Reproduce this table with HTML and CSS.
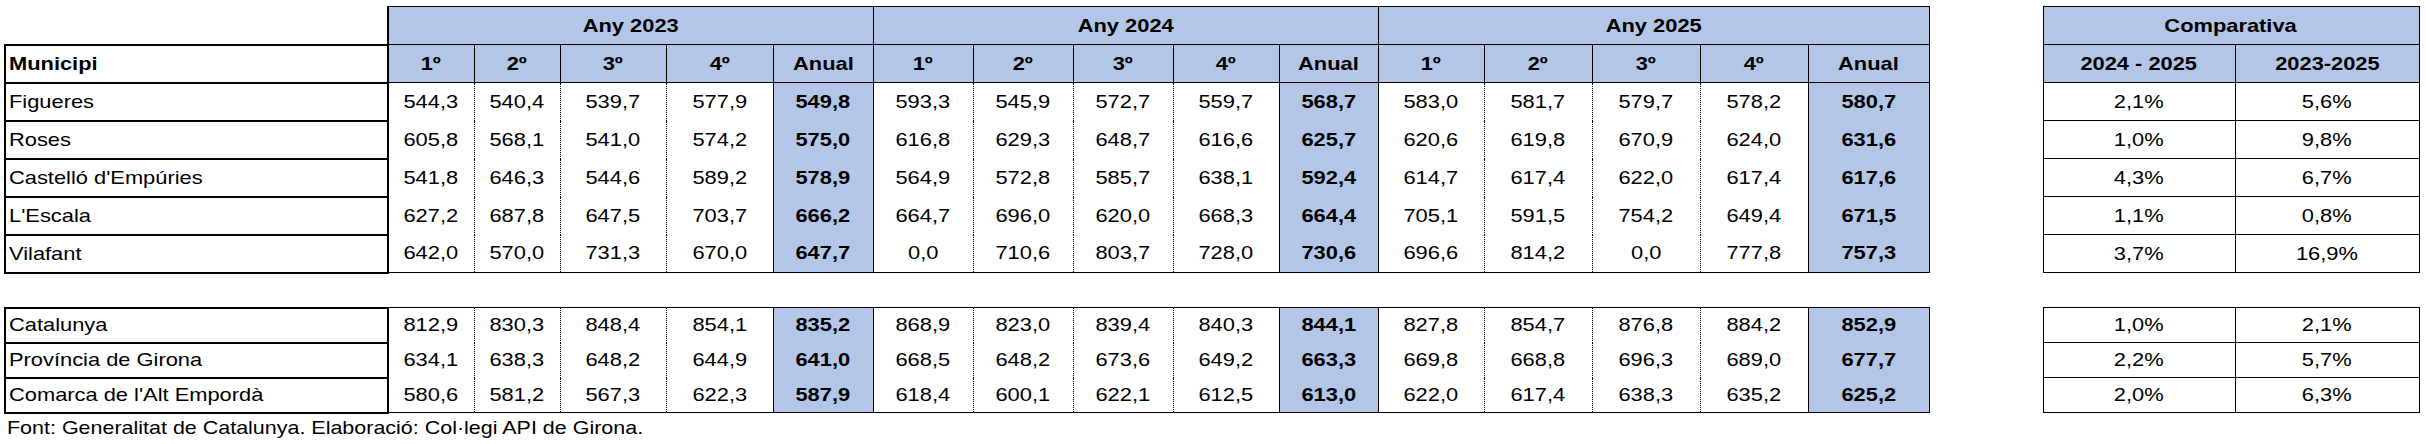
FILE: index.html
```html
<!DOCTYPE html>
<html lang="ca">
<head>
<meta charset="utf-8">
<title>Taula</title>
<link rel="stylesheet" href="styles.css">
</head>
<body>
<div class="sheet">
<table class="grid">
<colgroup>
<col class="w-name">
<col class="w86"><col class="w86"><col class="w106"><col class="w107"><col class="w100">
<col class="w100"><col class="w100"><col class="w100"><col class="w106"><col class="w99">
<col class="w106"><col class="w108"><col class="w108"><col class="w108"><col class="w121">
<col class="w-gap">
<col class="w192"><col class="w184">
</colgroup>
<tr class="hr">
<td class="blank"></td>
<th class="year first" colspan="5"><span class="t">Any 2023</span></th>
<th class="year" colspan="5"><span class="t">Any 2024</span></th>
<th class="year" colspan="5"><span class="t">Any 2025</span></th>
<td class="gap"></td>
<th class="year" colspan="2"><span class="t">Comparativa</span></th>
</tr>
<tr class="hr">
<th class="name head"><span class="t">Municipi</span></th>
<th class="hc"><span class="t">1º</span></th><th class="hc"><span class="t">2º</span></th><th class="hc"><span class="t">3º</span></th><th class="hc"><span class="t">4º</span></th><th class="hc"><span class="t">Anual</span></th>
<th class="hc"><span class="t">1º</span></th><th class="hc"><span class="t">2º</span></th><th class="hc"><span class="t">3º</span></th><th class="hc"><span class="t">4º</span></th><th class="hc"><span class="t">Anual</span></th>
<th class="hc"><span class="t">1º</span></th><th class="hc"><span class="t">2º</span></th><th class="hc"><span class="t">3º</span></th><th class="hc"><span class="t">4º</span></th><th class="hc"><span class="t">Anual</span></th>
<td class="gap"></td>
<th class="hc"><span class="t">2024 - 2025</span></th><th class="hc"><span class="t">2023-2025</span></th>
</tr>
<tr class="dr">
<td class="name"><span class="t">Figueres</span></td>
<td class="q"><span class="t">544,3</span></td><td class="q"><span class="t">540,4</span></td><td class="q"><span class="t">539,7</span></td><td class="q"><span class="t">577,9</span></td><td class="an"><span class="t">549,8</span></td>
<td class="q"><span class="t">593,3</span></td><td class="q"><span class="t">545,9</span></td><td class="q"><span class="t">572,7</span></td><td class="q"><span class="t">559,7</span></td><td class="an"><span class="t">568,7</span></td>
<td class="q"><span class="t">583,0</span></td><td class="q"><span class="t">581,7</span></td><td class="q"><span class="t">579,7</span></td><td class="q"><span class="t">578,2</span></td><td class="an"><span class="t">580,7</span></td>
<td class="gap"></td>
<td class="pc"><span class="t">2,1%</span></td><td class="pc"><span class="t">5,6%</span></td>
</tr>
<tr class="dr">
<td class="name"><span class="t">Roses</span></td>
<td class="q"><span class="t">605,8</span></td><td class="q"><span class="t">568,1</span></td><td class="q"><span class="t">541,0</span></td><td class="q"><span class="t">574,2</span></td><td class="an"><span class="t">575,0</span></td>
<td class="q"><span class="t">616,8</span></td><td class="q"><span class="t">629,3</span></td><td class="q"><span class="t">648,7</span></td><td class="q"><span class="t">616,6</span></td><td class="an"><span class="t">625,7</span></td>
<td class="q"><span class="t">620,6</span></td><td class="q"><span class="t">619,8</span></td><td class="q"><span class="t">670,9</span></td><td class="q"><span class="t">624,0</span></td><td class="an"><span class="t">631,6</span></td>
<td class="gap"></td>
<td class="pc"><span class="t">1,0%</span></td><td class="pc"><span class="t">9,8%</span></td>
</tr>
<tr class="dr">
<td class="name"><span class="t">Castelló d'Empúries</span></td>
<td class="q"><span class="t">541,8</span></td><td class="q"><span class="t">646,3</span></td><td class="q"><span class="t">544,6</span></td><td class="q"><span class="t">589,2</span></td><td class="an"><span class="t">578,9</span></td>
<td class="q"><span class="t">564,9</span></td><td class="q"><span class="t">572,8</span></td><td class="q"><span class="t">585,7</span></td><td class="q"><span class="t">638,1</span></td><td class="an"><span class="t">592,4</span></td>
<td class="q"><span class="t">614,7</span></td><td class="q"><span class="t">617,4</span></td><td class="q"><span class="t">622,0</span></td><td class="q"><span class="t">617,4</span></td><td class="an"><span class="t">617,6</span></td>
<td class="gap"></td>
<td class="pc"><span class="t">4,3%</span></td><td class="pc"><span class="t">6,7%</span></td>
</tr>
<tr class="dr">
<td class="name"><span class="t">L'Escala</span></td>
<td class="q"><span class="t">627,2</span></td><td class="q"><span class="t">687,8</span></td><td class="q"><span class="t">647,5</span></td><td class="q"><span class="t">703,7</span></td><td class="an"><span class="t">666,2</span></td>
<td class="q"><span class="t">664,7</span></td><td class="q"><span class="t">696,0</span></td><td class="q"><span class="t">620,0</span></td><td class="q"><span class="t">668,3</span></td><td class="an"><span class="t">664,4</span></td>
<td class="q"><span class="t">705,1</span></td><td class="q"><span class="t">591,5</span></td><td class="q"><span class="t">754,2</span></td><td class="q"><span class="t">649,4</span></td><td class="an"><span class="t">671,5</span></td>
<td class="gap"></td>
<td class="pc"><span class="t">1,1%</span></td><td class="pc"><span class="t">0,8%</span></td>
</tr>
<tr class="dr last">
<td class="name"><span class="t">Vilafant</span></td>
<td class="q"><span class="t">642,0</span></td><td class="q"><span class="t">570,0</span></td><td class="q"><span class="t">731,3</span></td><td class="q"><span class="t">670,0</span></td><td class="an"><span class="t">647,7</span></td>
<td class="q"><span class="t">0,0</span></td><td class="q"><span class="t">710,6</span></td><td class="q"><span class="t">803,7</span></td><td class="q"><span class="t">728,0</span></td><td class="an"><span class="t">730,6</span></td>
<td class="q"><span class="t">696,6</span></td><td class="q"><span class="t">814,2</span></td><td class="q"><span class="t">0,0</span></td><td class="q"><span class="t">777,8</span></td><td class="an"><span class="t">757,3</span></td>
<td class="gap"></td>
<td class="pc"><span class="t">3,7%</span></td><td class="pc"><span class="t">16,9%</span></td>
</tr>
<tr class="sep"><td class="gap" colspan="19"></td></tr>
<tr class="br first-row">
<td class="name"><span class="t">Catalunya</span></td>
<td class="q"><span class="t">812,9</span></td><td class="q"><span class="t">830,3</span></td><td class="q"><span class="t">848,4</span></td><td class="q"><span class="t">854,1</span></td><td class="an"><span class="t">835,2</span></td>
<td class="q"><span class="t">868,9</span></td><td class="q"><span class="t">823,0</span></td><td class="q"><span class="t">839,4</span></td><td class="q"><span class="t">840,3</span></td><td class="an"><span class="t">844,1</span></td>
<td class="q"><span class="t">827,8</span></td><td class="q"><span class="t">854,7</span></td><td class="q"><span class="t">876,8</span></td><td class="q"><span class="t">884,2</span></td><td class="an"><span class="t">852,9</span></td>
<td class="gap"></td>
<td class="pc"><span class="t">1,0%</span></td><td class="pc"><span class="t">2,1%</span></td>
</tr>
<tr class="br">
<td class="name"><span class="t">Província de Girona</span></td>
<td class="q"><span class="t">634,1</span></td><td class="q"><span class="t">638,3</span></td><td class="q"><span class="t">648,2</span></td><td class="q"><span class="t">644,9</span></td><td class="an"><span class="t">641,0</span></td>
<td class="q"><span class="t">668,5</span></td><td class="q"><span class="t">648,2</span></td><td class="q"><span class="t">673,6</span></td><td class="q"><span class="t">649,2</span></td><td class="an"><span class="t">663,3</span></td>
<td class="q"><span class="t">669,8</span></td><td class="q"><span class="t">668,8</span></td><td class="q"><span class="t">696,3</span></td><td class="q"><span class="t">689,0</span></td><td class="an"><span class="t">677,7</span></td>
<td class="gap"></td>
<td class="pc"><span class="t">2,2%</span></td><td class="pc"><span class="t">5,7%</span></td>
</tr>
<tr class="br last">
<td class="name"><span class="t">Comarca de l'Alt Empordà</span></td>
<td class="q"><span class="t">580,6</span></td><td class="q"><span class="t">581,2</span></td><td class="q"><span class="t">567,3</span></td><td class="q"><span class="t">622,3</span></td><td class="an"><span class="t">587,9</span></td>
<td class="q"><span class="t">618,4</span></td><td class="q"><span class="t">600,1</span></td><td class="q"><span class="t">622,1</span></td><td class="q"><span class="t">612,5</span></td><td class="an"><span class="t">613,0</span></td>
<td class="q"><span class="t">622,0</span></td><td class="q"><span class="t">617,4</span></td><td class="q"><span class="t">638,3</span></td><td class="q"><span class="t">635,2</span></td><td class="an"><span class="t">625,2</span></td>
<td class="gap"></td>
<td class="pc"><span class="t">2,0%</span></td><td class="pc"><span class="t">6,3%</span></td>
</tr>
</table>
<p class="note"><span class="t">Font: Generalitat de Catalunya. Elaboració: Col·legi API de Girona.</span></p>
</div>
</body>
</html>
```

FILE: styles.css
```css
html, body {
  margin: 0;
  padding: 0;
  background: #ffffff;
}

.sheet {
  padding: 6px 0 0 4px;
  font-family: "Liberation Sans", Arial, sans-serif;
  font-size: 19px;
  color: #000000;
}

.grid {
  border-collapse: collapse;
  table-layout: fixed;
  width: 2414px;
}

.w-name { width: 383px; }
.w86 { width: 86px; }
.w99 { width: 99px; }
.w100 { width: 100px; }
.w106 { width: 106px; }
.w107 { width: 107px; }
.w108 { width: 108px; }
.w121 { width: 121px; }
.w-gap { width: 114px; }
.w192 { width: 192px; }
.w184 { width: 184px; }

.grid th,
.grid td {
  padding: 0;
  text-align: center;
  vertical-align: middle;
  white-space: nowrap;
  overflow: visible;
}

.t {
  display: inline-block;
  transform: scaleX(1.15);
  transform-origin: center;
}

.hr { height: 38px; }
.dr { height: 38px; }
.br { height: 35px; }
.sep { height: 35px; }

.blank,
.gap {
  border: none;
  background: transparent;
}

.year,
.hc {
  background: #b4c6e7;
  border: 1px solid #000;
  font-weight: bold;
}

.year.first {
  border-left: 2px solid #000;
}

.name {
  border: 2px solid #000;
  text-align: left !important;
  padding: 0 3px !important;
  background: #fff;
}

.name .t {
  transform-origin: left center;
}

.name.head {
  font-weight: bold;
}

.q {
  border-left: 1px dotted #000;
  border-right: 1px dotted #000;
}

.an {
  background: #b4c6e7;
  font-weight: bold;
  border-left: 1px solid #000;
  border-right: 1px solid #000;
}

.pc {
  border: 1px solid #000;
}

.first-row .q,
.first-row .an {
  border-top: 1px solid #000;
}

.last .q,
.last .an {
  border-bottom: 1px solid #000;
}

.note {
  margin: 3px 0 0 3px;
  font-size: 19px;
}

.note .t {
  transform-origin: left center;
  transform: scaleX(1.13);
}
```
